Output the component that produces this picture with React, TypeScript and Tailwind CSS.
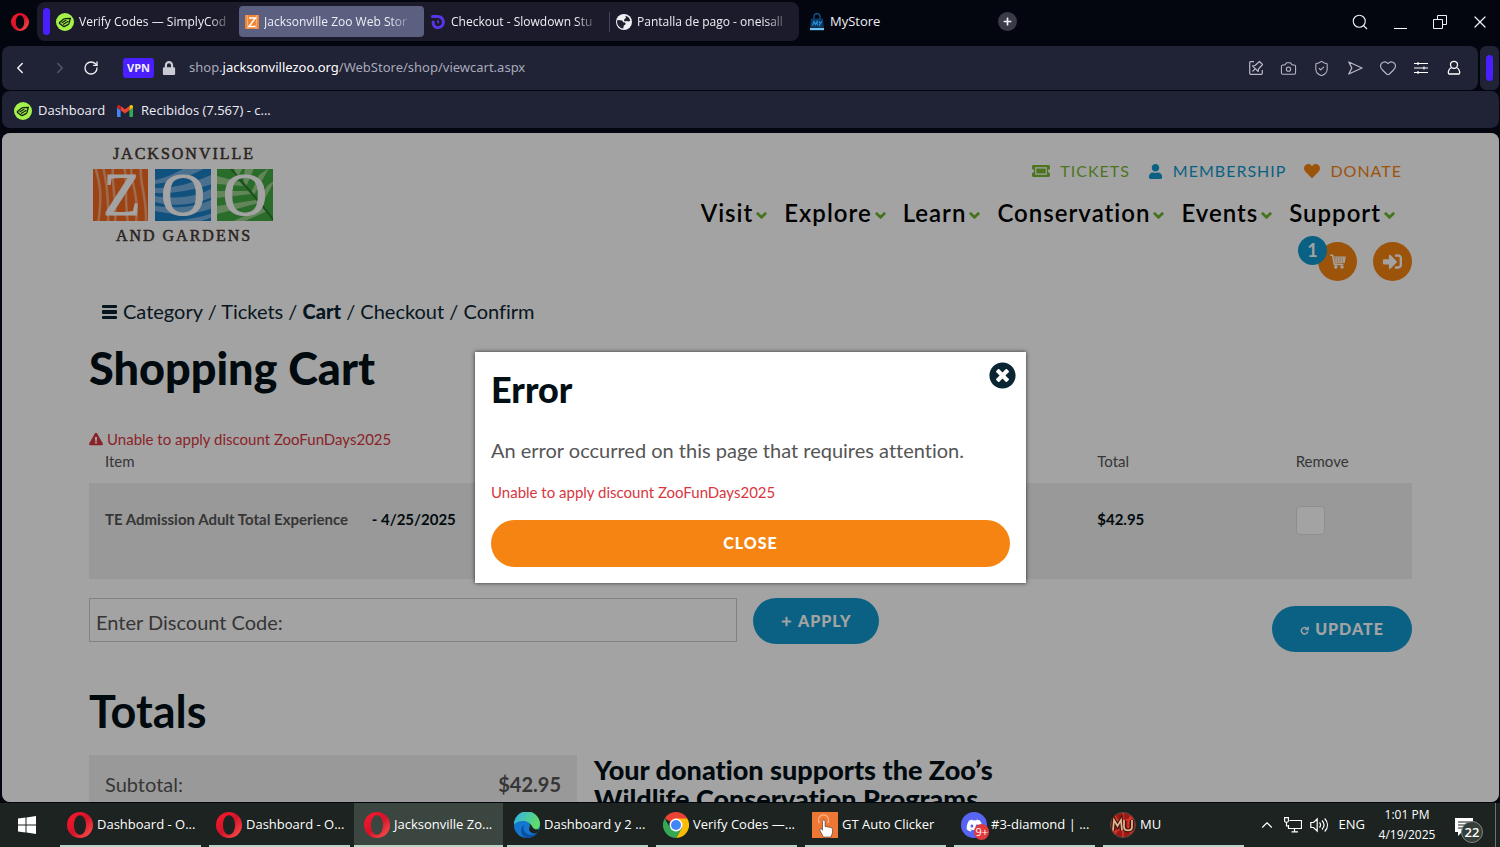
import { useState, type ReactNode } from "react";
import { FaChevronDown, FaDiscord, FaExclamationTriangle, FaHeart, FaLock, FaPlus, FaSignInAlt, FaTimesCircle, FaUser } from "react-icons/fa";
import { Camera, ChevronLeft, ChevronRight, ChevronUp, Heart, RotateCw, Search, ShieldCheck, X } from "lucide-react";

const NAV_LINKS = ["Visit", "Explore", "Learn", "Conservation", "Events", "Support"];

const OperaIcon = ({ className }: { className: string }) => (
  <svg viewBox="0 0 26 26" className={className} aria-hidden="true">
    <defs>
      <linearGradient id="operaRing" x1="0" y1="0" x2="1" y2="1">
        <stop offset="0" stopColor="#ff1b2d" />
        <stop offset="0.5" stopColor="#d5122a" />
        <stop offset="1" stopColor="#ff5a50" />
      </linearGradient>
    </defs>
    <path fill="url(#operaRing)" fillRule="evenodd" d="M13 0a13 13 0 1 0 0 26a13 13 0 1 0 0-26zM13 3.2c3.6 0 6 4.4 6 9.8s-2.400 9.800-6 9.800s-6-4.400-6-9.800s2.400-9.800 6-9.800z" />
  </svg>
);

const SimplyCodesIcon = () => (
  <svg viewBox="0 0 18 18" className="size-[18px] shrink-0" aria-hidden="true">
    <circle cx="9" cy="9" r="9" fill="#a5f04a" />
    <path d="M3.500 9.500l4-3.300c.5-.4 1-.6 1.600-.6l5.200-.2-1.300 5c-.2.600-.5 1-1 1.200l-3.500 1.700c-.6.300-1.200.2-1.600-.2L3.600 10.500c-.3-.3-.4-.7-.1-1z" fill="none" stroke="#12210c" strokeWidth="1.300" />
    <path d="M6 9.800l4-2.500M7.500 11.300L12 8.400" stroke="#12210c" strokeWidth="1.200" strokeLinecap="round" />
  </svg>
);

const ZooIcon = () => (
  <svg viewBox="0 0 14 14" className="size-[14px] shrink-0" aria-hidden="true">
    <path fill="#ee8434" d="M0 0h14v14H0z" />
    <path d="M2 0l1 14M12 0l-1 14" stroke="#f9b683" />
    <path d="M4 3h6.500L4 11.500h6.500" fill="none" stroke="#fff" strokeWidth="1.500" />
  </svg>
);

const SlowdownIcon = () => (
  <svg viewBox="0 0 16 16" className="size-4 shrink-0" aria-hidden="true">
    <path d="M2.500 2.500h5.300a5.600 5.600 0 0 1 0 11.200a4.600 4.600 0 0 1-4.600-4.600V8" fill="none" stroke="#5a35e8" strokeWidth="3" strokeLinecap="round" />
    <path d="M7.500 6.300c1 .8 1 2 .3 3" fill="none" stroke="#5a35e8" strokeWidth="1.600" />
  </svg>
);

const GlobeIcon = () => (
  <svg viewBox="0 0 16 16" className="size-4 shrink-0" aria-hidden="true">
    <circle cx="8" cy="8" r="8" fill="#eef0f4" />
    <path fill="#20202f" d="M1.500 6l3.300.3c1.700.2 2.200 1 2.400 2l1.600.3c1 .3 1 1.300.5 2l-1.600 1.200-.4 2.600A6.300 6.300 0 0 1 1.500 6zM8.800 1.700a6.400 6.400 0 0 1 5.400 5.100l-1.700.8-2-.5-1.700.4-.9-1.300.8-1.500 1.300-.7-.2-1.200z" />
  </svg>
);

const BagIcon = () => (
  <svg viewBox="0 0 16 18" className="h-[18px] w-4 shrink-0" aria-hidden="true">
    <path d="M5 6V3.500a3 3 0 0 1 6 0V6" fill="none" stroke="#0e5c99" strokeWidth="1.300" />
    <path fill="#0a3a63" d="M2 5.500h12l.8 8.500H1.200z" />
    <path d="M3.500 12.500l1.500-4 1.500 3 1.500-3 .5 3.500M10 8.500l1.300 2L13 8.300M11.300 10.500L10 13" fill="none" stroke="#2591dd" strokeWidth="1.200" />
    <path fill="#6cc4f5" d="M1 14.800h14v2.400H1z" />
  </svg>
);

const GmailIcon = () => (
  <svg viewBox="0 0 16 12" className="h-3 w-4 shrink-0" aria-hidden="true">
    <path fill="#4285f4" d="M0 2.500l3.600 2.700V12H1.100C.5 12 0 11.500 0 10.900z" />
    <path fill="#34a853" d="M16 2.500l-3.600 2.700V12h2.500c.6 0 1.100-.5 1.100-1.100z" />
    <path fill="#ea4335" d="M3.600 5.300V.9L8 4.200 12.400.9v4.400L8 8.600z" />
    <path fill="#c5221f" d="M0 1.700v1l3.600 2.600V.9L2.600.3C1.500-.5 0 .3 0 1.700z" />
    <path fill="#fbbc04" d="M16 1.700v1l-3.600 2.600V.9l1-.6C14.500-.5 16 .3 16 1.700z" />
  </svg>
);

const EdgeIcon = () => (
  <svg viewBox="0 0 26 26" className="size-[26px] shrink-0" aria-hidden="true">
    <defs>
      <linearGradient id="edgeTop" x1="0" y1="0" x2="1" y2="0.400">
        <stop offset="0" stopColor="#2fb0ee" />
        <stop offset="1" stopColor="#5fdc6a" />
      </linearGradient>
    </defs>
    <circle cx="13" cy="13" r="13" fill="#1377cf" />
    <path fill="url(#edgeTop)" d="M0 12.500A13 13 0 0 1 26 12c0 4-3 6-6.500 6-3 0-4.500-1-4-2 1.500-2 1-5.500-3-6.500C7.500 8.300 2.500 9.500 0 12.500z" />
    <path fill="#0c4f9f" d="M10 12.500c-2 5 1.500 10.500 7.500 10.200 2.500 0 4.500-.8 6-2A13 13 0 0 1 13 26c-6-1-8-9-3-13.500z" />
    <path fill="#1c2320" d="M15.300 15.800c.8-1.300.8-3-.1-4.500 3 1.500 3 5.500 6.800 6.300l3-.4-1.500 3.500c-4 2.300-9.500-.6-8.200-4.900z" />
  </svg>
);

const ChromeIcon = () => (
  <svg viewBox="0 0 26 26" className="size-[26px] shrink-0" aria-hidden="true">
    <path fill="#ea4335" d="M13 13L1.740 6.500A13 13 0 0 1 24.260 6.500z" />
    <path fill="#fbbc05" d="M13 6.500h11.260A13 13 0 0 1 13 26l5.630-9.750z" />
    <path fill="#34a853" d="M1.740 6.500A13 13 0 0 0 13 26l5.630-9.750L13 13l-5.630 3.250z" />
    <circle cx="13" cy="13" r="6.500" fill="#fff" />
    <circle cx="13" cy="13" r="5" fill="#4285f4" />
  </svg>
);

const ClickerIcon = () => (
  <svg viewBox="0 0 26 26" className="size-[26px] shrink-0" aria-hidden="true">
    <path fill="#ee7733" d="M0 0h26v26H0z" />
    <path d="M7.500 11a5 5 0 1 1 8 0" fill="none" stroke="#f7b48c" strokeWidth="1.300" />
    <path fill="#fff" stroke="#333" strokeWidth="0.600" d="M10.500 9.500c0-2 2.600-2 2.600 0v5l5.700 1c1.300.3 1.700 1 1.700 2.200V21l-1.700 4h-7.500L8 18.500c-.8-1.500 1-2.500 2-1.300l.5 1.100z" />
  </svg>
);

const DiscordIcon = () => (
  <span className="relative flex size-[26px] shrink-0 items-center justify-center rounded-full bg-[#5865f2] text-white">
    <FaDiscord className="size-[17px]" />
    <span className="absolute -right-0.5 -bottom-0.5 rounded-full bg-[#e0393e] px-px text-[11px] leading-4">9+</span>
  </span>
);

const MuIcon = () => (
  <svg viewBox="0 0 26 26" className="size-[26px] shrink-0" aria-hidden="true">
    <circle cx="13" cy="13" r="12.500" fill="#9c1a16" stroke="#5a4a40" />
    <path d="M13 1v24M5 4c4 5 4 13 0 18M21 4c-4 5-4 13 0 18M3 6c6 3 14 3 20 0M3 20c6-3 14-3 20 0" fill="none" stroke="#d8382a" strokeWidth="1.500" />
    <path d="M3 18.500l1-10.500 3.500 6L11 8l1 10.500M14 8v7c0 4.500 8 4.500 8 0V8" fill="none" stroke="#40130f" strokeWidth="4" />
    <path d="M3 18.500l1-10.500 3.500 6L11 8l1 10.500M14 8v7c0 4.500 8 4.500 8 0V8" fill="none" stroke="#dcb48e" strokeWidth="1.800" />
  </svg>
);

const TicketIcon = () => (
  <svg viewBox="0 0 18 12" className="h-3 w-[18px]" aria-hidden="true">
    <path fill="currentColor" fillRule="evenodd" d="M1.500 0h15C17.300 0 18 .7 18 1.500V4a2 2 0 0 0 0 4v2.500c0 .8-.7 1.500-1.500 1.500h-15C.7 12 0 11.300 0 10.500V8a2 2 0 0 0 0-4V1.500C0 .7.7 0 1.500 0zM3.200 2.300v7.400h11.600V2.300zM4.300 3.400h9.400v5.200H4.300z" />
  </svg>
);

const CartIcon = () => (
  <svg viewBox="0 0 16 15" className="h-[15px] w-4" aria-hidden="true">
    <path d="M0 1.200h2.600l1.800 9.300h9" fill="none" stroke="currentColor" strokeWidth="1.500" />
    <path d="M3.300 3h11.900l-1 5.500-10 .5M3.500 5h11M4 7h10.500M6.200 3v6M8.700 3v6M11.200 3v6M13.600 3v5" fill="none" stroke="currentColor" strokeWidth="1.100" />
    <circle cx="5.800" cy="13" r="1.700" fill="currentColor" />
    <circle cx="12" cy="13" r="1.700" fill="currentColor" />
  </svg>
);

const ZooLogo = () => (
  <svg viewBox="0 0 180 98" className="h-[98px] w-[180px]" role="img" aria-label="Jacksonville Zoo and Gardens">
    <defs>
      <clipPath id="tileZ"><path d="M0 23h55v52H0z" /></clipPath>
      <clipPath id="tileO"><path d="M62 23h56v52H62z" /></clipPath>
      <clipPath id="tileG"><path d="M124 23h56v52h-56z" /></clipPath>
    </defs>
    <g clipPath="url(#tileZ)">
      <path fill="#f26a21" d="M0 23h55v52H0z" />
      <path d="M2 20c4 15 8 25 3 58M10 20c3 15 6 30 5 58M20 20c-2 20 4 30 2 58M31 20c4 14 0 30 4 58M38 20c0 18 8 28 5 58M48 20c-2 18 6 28 5 58" fill="none" stroke="#f9a878" strokeWidth="2.500" />
    </g>
    <g clipPath="url(#tileO)">
      <path fill="#1b7fc4" d="M62 23h56v52H62z" />
      <path fill="#75b0e0" d="M62 34c12-2 22-8 30-12h20c-14 8-32 14-50 16zM62 42c22 0 40-6 58-14v10c-20 6-40 10-58 9zM62 50c20 3 40 2 58-8v9c-18 8-40 10-58 5zM62 60c22 3 42 1 58-7v9c-18 7-36 8-58 3zM66 75c18 0 36-2 54-8v4c-10 4-20 6-30 8z" />
    </g>
    <g clipPath="url(#tileG)">
      <path fill="#43a940" d="M124 23h56v52h-56z" />
      <path fill="#9ad08d" d="M141 28l1-8 8 2-6 10zM150 38l2-16 10-2-9 21zM158 47l8-18 10-7-15 27zM166 56l8-16 8-6-13 24zM147 36l-23-6v8l26 2zM155 45l-31 0v7l34-4zM163 54l-39 6v8l42-11zM170 62l-32 14h12l24-11z" />
      <path d="M136 20c14 18 30 34 46 56" fill="none" stroke="#2b7a2c" strokeWidth="2" />
    </g>
    <g fontFamily="'Liberation Serif', serif" textAnchor="middle">
      <g fill="#fff" stroke="#fff" strokeWidth="1" fontSize="61">
        <text x="29" y="69">Z</text>
        <text x="90" y="69">O</text>
        <text x="152" y="69">O</text>
      </g>
      <g fill="#453731" stroke="#453731" strokeWidth="0.500" fontSize="16" className="tracking-[2px]">
        <text x="91" y="13">JACKSONVILLE</text>
        <text x="91" y="95">AND GARDENS</text>
      </g>
    </g>
  </svg>
);

const Tab = ({ icon, title, active = false }: { icon: ReactNode; title: string; active?: boolean }) => (
  <button
    role="tab"
    aria-selected={active}
    className={`flex h-[31px] w-[185px] items-center gap-[5px] rounded px-1.5 text-xs whitespace-nowrap ${active ? "bg-[#5b5f80]" : ""}`}
  >
    {icon}
    <span className="[mask-image:linear-gradient(to_right,black_88%,rgba(0,0,0,0.3))]">{title}</span>
  </button>
);

const BrowserChrome = () => (
  <header className="shrink-0 text-[13px] text-[#eeeff5]">
    <div className="flex h-[46px] items-start pt-0.5">
      <button aria-label="Opera menu" className="flex h-[39px] w-[37px] shrink-0 items-center justify-center pl-0.5">
        <OperaIcon className="size-[18px]" />
      </button>
      <div role="tablist" className="flex h-[39px] items-center rounded-lg bg-[#1c1b2b] pr-1 pl-1.5">
        <span className="h-[27px] w-[7px] rounded-full bg-[#4a1fff]" />
        <Tab icon={<SimplyCodesIcon />} title="Verify Codes — SimplyCod" />
        <span className="w-1" />
        <Tab active icon={<ZooIcon />} title="Jacksonville Zoo Web Stor" />
        <Tab icon={<SlowdownIcon />} title="Checkout - Slowdown Stu" />
        <span className="h-5 w-px bg-[#44445a]" />
        <Tab icon={<GlobeIcon />} title="Pantalla de pago - oneisall" />
      </div>
      <button className="ml-2.5 flex h-[39px] w-[189px] items-center gap-[5px]">
        <BagIcon />
        MyStore
      </button>
      <button aria-label="New tab" className="mt-2.5 flex size-[19px] items-center justify-center rounded-full bg-[#3b3b48]">
        <FaPlus className="size-[9px]" />
      </button>
      <div className="ml-auto flex h-[39px] items-center">
        <button aria-label="Search tabs" className="flex w-10 justify-center"><Search className="size-[18px]" strokeWidth={1.500} /></button>
        <button aria-label="Minimize" className="flex h-4 w-10 items-end justify-center pb-px"><span className="h-px w-[13px] bg-white" /></button>
        <button aria-label="Restore" className="flex w-10 justify-center">
          <svg viewBox="0 0 14 14" className="size-[14px]" fill="none" stroke="currentColor">
            <path d="M.5 4.500h9v9h-9zM4.500 4V.5h9v9H10" />
          </svg>
        </button>
        <button aria-label="Close window" className="flex w-10 justify-center"><X className="size-5" strokeWidth={1.500} /></button>
      </div>
    </div>

    <div className="flex h-11 gap-0.5 pr-px pl-0.5">
      <div className="flex flex-1 items-center rounded-lg bg-[#202235] pr-2 pl-[9px]">
        <button aria-label="Back" className="w-10"><ChevronLeft className="size-[18px]" /></button>
        <button aria-label="Forward" className="w-8 text-[#55576b]"><ChevronRight className="size-[18px]" /></button>
        <button aria-label="Reload" className="w-10"><RotateCw className="size-4" /></button>
        <button className="h-5 rounded-[3px] bg-[#4a1fff] px-1 text-[11px] leading-5 font-bold">VPN</button>
        <FaLock className="mx-2 size-[14px] text-[#c9cad3]" />
        <div className="ml-[5px] font-['Noto_Sans',sans-serif] text-[#a8aabb]">
          shop.<span className="text-white">jacksonvillezoo.org</span>/WebStore/shop/viewcart.aspx
        </div>
        <div className="ml-auto flex items-center text-[#b7b9c7]">
          <button aria-label="Edit page" className="flex w-[33px] justify-center">
            <svg viewBox="0 0 16 16" className="size-4" fill="none" stroke="currentColor" strokeWidth="1.200" strokeLinejoin="round">
              <path d="M6 1.700H2.700a1 1 0 0 0-1 1v10.600a1 1 0 0 0 1 1h10.600a1 1 0 0 0 1-1V10M11.500 1.500l3 3-4 4.500-.3 2.500-5.700-5.700L7 5.500zM7.300 8.700L4.500 11.500" />
            </svg>
          </button>
          <button aria-label="Snapshot" className="flex w-[33px] justify-center"><Camera className="size-[17px]" strokeWidth={1.500} /></button>
          <button aria-label="Ad blocker" className="flex w-[33px] justify-center"><ShieldCheck className="size-[17px]" strokeWidth={1.500} /></button>
          <button aria-label="Send" className="flex w-[33px] justify-center">
            <svg viewBox="0 0 16 16" className="size-4" fill="none" stroke="currentColor" strokeWidth="1.300" strokeLinejoin="round">
              <path d="M1.800 2L15 8 1.800 14l3-6z" />
            </svg>
          </button>
          <button aria-label="Bookmark" className="flex w-[33px] justify-center"><Heart className="size-[18px]" strokeWidth={1.500} /></button>
          <button aria-label="Easy setup" className="flex w-[33px] justify-center text-white">
            <svg viewBox="0 0 14 14" className="size-[14px]" fill="none" stroke="currentColor" strokeWidth="1.200">
              <path d="M0 2.500h14M0 7h14M0 11.500h14M4 1v3M10 5.500v3M4 10v3" />
            </svg>
          </button>
          <button aria-label="Profile" className="flex w-[33px] justify-center text-white">
            <svg viewBox="0 0 14 16" className="h-4 w-[14px]" fill="none" stroke="currentColor" strokeWidth="1.300">
              <circle cx="7" cy="4.800" r="3.500" />
              <path d="M4.500 7.500C1 9 .5 14 2.500 14h9c2 0 1.500-5-2-6.500" />
            </svg>
          </button>
        </div>
      </div>
      <button aria-label="Sidebar" className="flex w-[19px] items-center justify-center rounded-md bg-[#202235]">
        <span className="h-[26px] w-[7px] rounded-full bg-[#4a1fff]" />
      </button>
    </div>

    <nav aria-label="Bookmarks" className="mt-px mr-px ml-0.5 flex h-[37px] items-center rounded-lg bg-[#202235] pt-0.5 pl-3">
      <a href="#" className="flex items-center gap-1.5"><SimplyCodesIcon />Dashboard</a>
      <a href="#" className="ml-3 flex items-center gap-2"><GmailIcon />Recibidos (7.567) - c...</a>
    </nav>
  </header>
);

const SiteHeader = () => (
  <header className="flex justify-between pt-[13px]">
    <a href="#" className="ml-1 h-[98px]"><ZooLogo /></a>
    <div className="flex flex-col items-end">
      <nav aria-label="Quick links" className="mt-[15px] mr-2.5 flex gap-[18px] text-base leading-5 tracking-[1px]">
        <a href="#" className="flex items-center gap-2.5 text-[#78b833]"><TicketIcon />TICKETS</a>
        <a href="#" className="flex items-center gap-2.5 text-[#1298cd]"><FaUser className="size-[15px]" />MEMBERSHIP</a>
        <a href="#" className="flex items-center gap-2.5 text-[#f58412]"><FaHeart className="size-4" />DONATE</a>
      </nav>
      <nav aria-label="Main" className="mt-4 mr-[17px] flex gap-[17px] text-2xl leading-8 font-semibold tracking-[1px] text-black">
        {NAV_LINKS.map((link) => (
          <a key={link} href="#" className="flex items-center gap-[3px]">
            {link}
            <FaChevronDown className="mt-1 size-[11px] text-[#6cb52d]" stroke="currentColor" strokeWidth={50} />
          </a>
        ))}
      </nav>
      <div className="mt-[13px] flex gap-4">
        <a href="#" aria-label="Cart, 1 item" className="relative flex size-[39px] items-center justify-center rounded-full bg-[#f58412] text-white">
          <CartIcon />
          <span className="absolute -top-1.5 -left-5 size-[29px] rounded-full bg-[#1298cd] text-center text-lg leading-7 font-bold">1</span>
        </a>
        <a href="#" aria-label="Sign in" className="flex size-[39px] items-center justify-center rounded-full bg-[#f58412] text-white">
          <FaSignInAlt className="size-[19px]" />
        </a>
      </div>
    </div>
  </header>
);

const ErrorDialog = ({ onClose }: { onClose: () => void }) => (
  <div className="absolute inset-0 flex items-center justify-center bg-black/36">
    <div
      role="dialog"
      aria-modal="true"
      aria-labelledby="error-title"
      className="relative w-full max-w-[551px] bg-white p-4 shadow-[0_0_4px_rgba(0,0,0,0.7)]"
    >
      <button aria-label="Close dialog" onClick={onClose} className="absolute top-2.5 right-2.5 text-[#0a2533]">
        <FaTimesCircle className="size-[27px]" />
      </button>
      <h2 id="error-title" className="text-4xl leading-[42px] font-black text-[#021016]">Error</h2>
      <p className="mt-[25px] text-xl leading-[30px] text-[#555]">An error occurred on this page that requires attention.</p>
      <p className="mt-[17px] text-[15px] leading-5 text-[#d9363e]">Unable to apply discount ZooFunDays2025</p>
      <button onClick={onClose} className="mt-[18px] h-[47px] w-full rounded-full bg-[#f58412] pb-0.5 text-base font-black tracking-[1px] text-white">
        CLOSE
      </button>
    </div>
  </div>
);

const CartPage = () => {
  const [showError, setShowError] = useState(true);
  const [remove, setRemove] = useState(false);

  return (
    <div className="relative mt-[5px] mr-px mb-px ml-0.5 min-h-0 flex-1 overflow-hidden rounded-lg bg-white font-[Lato,sans-serif] text-[#555] [font-variant-ligatures:none]">
      <div className="h-full overflow-hidden px-[87px]">
        <SiteHeader />

        <nav aria-label="Checkout steps" className="mt-[15px] flex items-center gap-1.5 pl-[13px] text-xl leading-[30px] text-[#0a2533]">
          <svg viewBox="0 0 15 14" className="mt-0.5 h-[14px] w-[15px]" fill="currentColor" aria-hidden="true">
            <rect width="15" height="3" rx="1" />
            <rect y="5" width="15" height="4" rx="1" />
            <rect y="11" width="15" height="3" rx="1" />
          </svg>
          <span>
            <a href="#">Category</a> / <a href="#">Tickets</a> / <a href="#" className="font-black">Cart</a> / <a href="#">Checkout</a> / <a href="#">Confirm</a>
          </span>
        </nav>

        <h1 className="mt-4 text-[45px] leading-[52px] font-black text-[#021016]">Shopping Cart</h1>

        <p className="mt-[35px] flex items-center gap-1 text-[15px] leading-5 text-[#d9363e]">
          <FaExclamationTriangle className="size-[14px]" />
          Unable to apply discount ZooFunDays2025
        </p>

        <table className="w-full table-fixed text-left">
          <colgroup>
            <col className="w-[75%]" />
            <col className="w-[15%]" />
            <col className="w-[10%]" />
          </colgroup>
          <thead>
            <tr className="text-[15px] leading-6">
              <th className="pb-2.5 pl-4 font-normal">Item</th>
              <th className="pb-2.5 pl-4 font-normal">Total</th>
              <th className="pb-2.5 pl-4 font-normal">Remove</th>
            </tr>
          </thead>
          <tbody>
            <tr className="h-24 bg-[#f0f0f0] align-top text-[15px] leading-6 font-bold">
              <td className="pt-6 pl-4">
                TE Admission Adult Total Experience <span className="ml-5 text-[#021016]">- 4/25/2025</span>
              </td>
              <td className="pt-6 pl-4 text-[#021016]">$42.95</td>
              <td className="pt-[23px] pl-4">
                <input
                  type="checkbox"
                  aria-label="Remove TE Admission Adult Total Experience"
                  checked={remove}
                  onChange={(e) => setRemove(e.target.checked)}
                  className="block size-[29px] appearance-none rounded border border-[#dedede] bg-white checked:bg-[#1298cd]"
                />
              </td>
            </tr>
          </tbody>
        </table>

        <div className="mt-[19px] flex items-start">
          <input
            type="text"
            aria-label="Discount code"
            placeholder="Enter Discount Code:"
            className="h-11 w-[49%] border border-[#ccc] px-1.5 pt-1 text-xl placeholder:text-[#555]"
          />
          <button className="ml-4 flex h-[46px] w-[126px] items-center justify-center gap-1.5 rounded-full bg-[#1298cd] text-base font-black tracking-[1px] text-white">
            <FaPlus className="size-[11px]" />
            APPLY
          </button>
          <button className="mt-2 ml-auto flex h-[46px] w-[140px] items-center justify-center gap-1.5 rounded-full bg-[#1298cd] text-base font-black tracking-[1px] text-white">
            <svg viewBox="0 0 9 9" className="mt-0.5 size-[9px]" aria-hidden="true">
              <path d="M6.500 2.200A3.200 3.200 0 1 0 7.700 5.500" fill="none" stroke="currentColor" strokeWidth="1.500" />
              <path fill="currentColor" d="M4.500 3.800L8.800.2v4.300z" />
            </svg>
            UPDATE
          </button>
        </div>

        <h2 className="mt-[33px] text-[45px] leading-[52px] font-bold text-[#021016]">Totals</h2>

        <div className="mt-[18px] flex gap-[17px]">
          <dl className="flex h-[72px] w-[488px] justify-between bg-[#f0f0f0] px-4 pt-[14px] text-xl leading-[30px]">
            <dt>Subtotal:</dt>
            <dd className="font-bold">$42.95</dd>
          </dl>
          <h3 className="w-[420px] text-[27px] leading-[29px] font-black text-[#021016]">
            Your donation supports the Zoo’s Wildlife Conservation Programs
          </h3>
        </div>
      </div>
      {showError && <ErrorDialog onClose={() => setShowError(false)} />}
    </div>
  );
};

const TASKS = [
  { icon: <OperaIcon className="size-[26px] shrink-0" />, label: "Dashboard - O..." },
  { icon: <OperaIcon className="size-[26px] shrink-0" />, label: "Dashboard - O..." },
  { icon: <OperaIcon className="size-[26px] shrink-0" />, label: "Jacksonville Zo...", active: true },
  { icon: <EdgeIcon />, label: "Dashboard y 2 ..." },
  { icon: <ChromeIcon />, label: "Verify Codes —..." },
  { icon: <ClickerIcon />, label: "GT Auto Clicker" },
  { icon: <DiscordIcon />, label: "#3-diamond | ..." },
  { icon: <MuIcon />, label: "MU" },
];

const Taskbar = () => (
  <footer className="flex h-11 shrink-0 items-stretch bg-[#1c2320] text-[13px] text-white">
    <button aria-label="Start" className="flex w-[54px] items-center justify-center">
      <svg viewBox="0 0 18 18" className="size-[18px]" fill="currentColor">
        <path d="M0 2.500l7.500-1v7H0zM8.500 1.400L18 0v8.500H8.500zM0 9.500h7.500v7L0 15.500zM8.500 9.500H18V18l-9.500-1.400z" />
      </svg>
    </button>
    <div className="flex pl-0.5">
      {TASKS.map((task, i) => (
        <button key={i} className={`flex w-[149px] flex-col ${task.active ? "bg-[#3b4640]" : "px-1"}`}>
          <span className={`flex flex-1 items-center gap-1 pt-0.5 whitespace-nowrap ${task.active ? "pl-2.5" : "pl-[7px]"}`}>
            {task.icon}
            {task.label}
          </span>
          <span className="h-0.5 w-full bg-[#b9d3c4]" />
        </button>
      ))}
    </div>
    <div className="ml-auto flex items-center">
      <button aria-label="Show hidden icons" className="mr-2"><ChevronUp className="size-[18px]" strokeWidth={1.500} /></button>
      <svg viewBox="0 0 18 16" className="mr-2 h-4 w-[18px]" fill="none" stroke="currentColor" strokeWidth="1.200">
        <path d="M5.500 3.500h12v8h-13V8M10.500 12v2.500M7.500 14.900h6.500M.6.600h3.800v3.500c0 1.500-3.800 1.500-3.800 0zM2.500 5.500V9h2" />
      </svg>
      <svg viewBox="0 0 19 16" className="mr-2.5 h-4 w-[19px]" fill="none" stroke="currentColor" strokeWidth="1.200">
        <path d="M.8 5.500h2.700L7.200 2v12L3.500 10.500H.8zM9.500 5.500c1.300 1.500 1.300 3.500 0 5M12 3.500c2.500 2.700 2.500 6.300 0 9M14.700 1.500c3.700 4 3.700 9 0 13" />
      </svg>
      <span className="mr-3">ENG</span>
      <time className="w-[60px] text-center text-xs leading-5 whitespace-nowrap">1:01 PM<br />4/19/2025</time>
      <button aria-label="22 notifications" className="relative ml-[18px] h-8 w-10">
        <svg viewBox="0 0 18 18" className="mt-1 size-[18px]">
          <path fill="#fff" d="M0 0h18v14H7l-4 4v-4H0z" />
          <path d="M3 4h12M3 7h12M3 10h8" stroke="#1c2320" strokeWidth="1.200" />
        </svg>
        <span className="absolute top-3 left-1.5 size-[22px] rounded-full border border-[#7e8782] bg-[#363e3a] text-center text-[13px] leading-5 font-semibold">22</span>
      </button>
      <span className="mr-1 h-full w-px bg-[#6b736f]" />
    </div>
  </footer>
);

export default function App() {
  return (
    <div className="flex h-screen flex-col overflow-hidden bg-[#03050f] font-['Open_Sans',sans-serif]">
      <BrowserChrome />
      <CartPage />
      <Taskbar />
    </div>
  );
}
